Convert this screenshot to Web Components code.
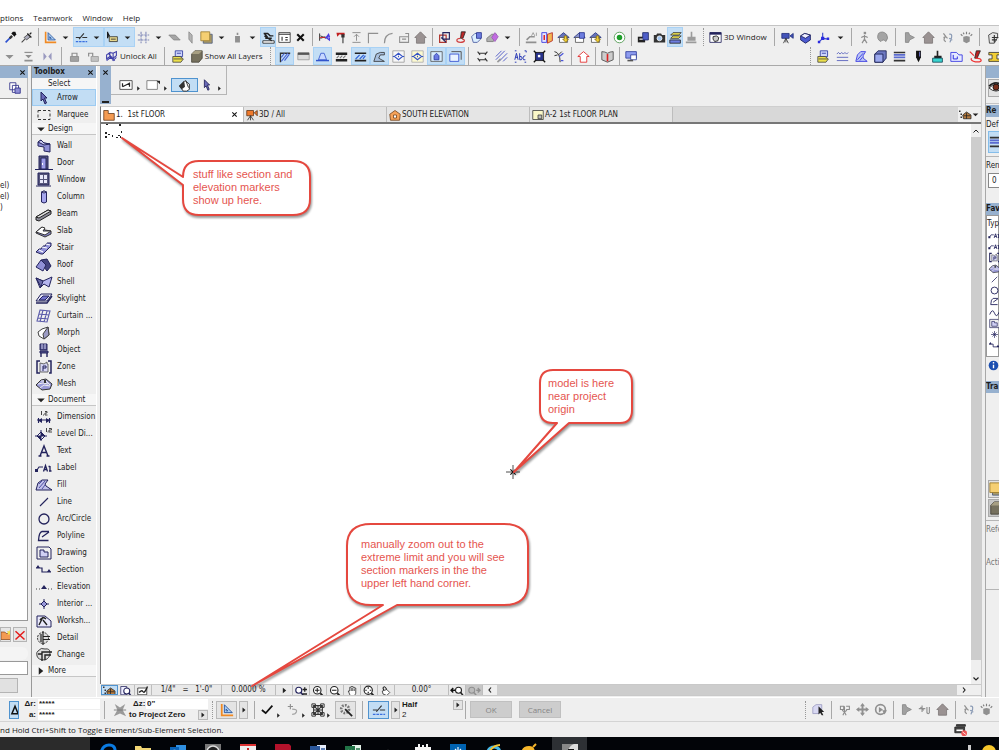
<!DOCTYPE html>
<html lang="en">
<head>
<meta charset="utf-8">
<title>1. 1st FLOOR</title>
<style>
  html, body { height: 100%; margin: 0; }
  body {
    overflow: hidden;
    background: #efefef;
    color: #1c1c1c;
    font: 8px/12px "DejaVu Sans Condensed", "DejaVu Sans", sans-serif;
  }
</style>
</head>
<body>
<cad-app></cad-app>
<script>
const s = (d, c = '#222', w = 1.4) => `<path d="${d}" fill="none" stroke="${c}" stroke-width="${w}"/>`;
const f = (d, c = '#222', st = 'none') => `<path d="${d}" fill="${c}" stroke="${st}"/>`;
const NAVY = '#23235c', BLUE = '#2b2be0', LILAC = '#8f8fd6', GREY = '#909090';

const ICONS = {
  // general
  down: f('M3 6h10l-5 5z'),
  right: f('M5 3v10l6-5z'),
  downgrey: f('M3 6h10l-5 5z', GREY),
  close: s('M3 3l10 10M13 3L3 13', '#111', 2.4),
  pipette: s('M2 14l6-6', '#2b50d0', 2) + s('M7 9l3-3', '#333', 3) + f('M9 3l4 4 2-3-1-3-3 0z', '#111'),
  syringe: s('M2 14l4-4', '#444', 1.4) + f('M5 8l5-4 3 3-5 4z', '#aab', '#444') + s('M9 3l5 5M12 4l2-2', '#222', 1.6),
  setsquare: s('M2 1v14M2 14h13', '#f08a24', 2) + f('M5 2v9h9z', '#a9cdf3', '#24509a') + f('M7 7v2h2z', '#fff', '#24509a'),
  guides: s('M1 8h5M9 8h6M5 10l6-7', '#333', 1.3) + `<path d="M1 13h14" stroke="#3a6fe0" stroke-width="1.6" stroke-dasharray="3 1"/>`,
  tracker: f('M2 1l1 7 2-2z', '#111') + s('M2 1v8', '#111', 1.4) + f('M4 7h10v6H4z', '#e9d98c', '#333') + s('M6 10h6', '#222', 1),
  grid: `<path d="M5 1v14M11 1v14M1 5h14M1 11h14" fill="none" stroke="#7f88b8" stroke-width="1.3" stroke-dasharray="3 1"/>`,
  plane: f('M1 5h8l6 6H7z', '#a5a5a5', '#858585'),
  planev: f('M6 1l4 4v10l-4-5z', '#b4b4b4', '#8a8a8a'),
  ghost: f('M4 4h11v11H4z', '#a89a6a', '#4c5d80') + f('M1 1h11v11H1z', '#f5cf72', '#9a7a2c'),
  weight: f('M5 6h6v8H5zM7 2h2v3H7z', GREY),
  worksheet: f('M1 12h14v3H1z', '#fff', '#222') + s('M2 3h5l3 3h4M3 6l9 6M4 9h8M3 3l4 5', '#222', 1.8),
  window12: f('M1 2h14v12H1z', '#fff', '#333') + s('M1 4h14M5 7v5M9 8h3M9 11h3', '#333'),
  cross: s('M4 4l8 8M12 4l-8 8', '#111', 2.6),
  scissors: s('M2 3v9M3 6l7 3M3 9l6-2', '#333', 1.2) + s('M2 8h8', '#d22', 1) + s('M10 8l3-4 1 3-4 1 4 3 0-3', '#4a3ce0', 1.5),
  axe: s('M11 4v11', '#555', 1.6) + f('M3 2h10v3h-3l-3-1-3 3z', '#c22121') + f('M9 4h4v4H9z', '#333'),
  split: s('M3 2h10M3 14h10M8 4v8M5 7l3-3 3 3', GREY, 1.2),
  corner: s('M3 15V3h12', GREY, 1.4),
  fillet: s('M3 15Q3 4 13 3', GREY, 1.5),
  resize: s('M2 7h11v7H2zM9 3h4v4M5 10h5', GREY, 1.3),
  housegrey: f('M8 1l7 7h-2v7H3V8H1z', '#9a9292', '#7c7676'),
  suspend: s('M2 5h8v9H2z', '#b2372f', 1.5) + s('M6 2h8v8H6zM4 8l6 6', NAVY, 1.4),
  marker: f('M9 1h5l-3 8H8z', '#c02828', '#222') + s('M8 9c-6 0-6 5 0 5s6-4 2-4', '#d04040', 1.5),
  shape: f('M2 7l4-4h6l1 7-4 4H4z', '#dcefff', '#43539a') + f('M8 2h6v7H8z', '#6d7de0', '#26328c'),
  paint: f('M1 9l6-5h6l-4 9H1z', '#b0b0b0', '#777') + f('M7 8l4-6 4 5-4 6z', '#c16be0', '#9a58b8'),
  a1: s('M1 14h13M2 11l4-4h6', GREY, 2) + s('M8 6l2-4 2 4M14 2v4', GREY, 1),
  info: f('M1 2h6v12H1z', '#e6e6ff', BLUE) + s('M4 5v6', '#d22', 1.8) + f('M8 4l6-2v10l-6 3z', '#f4b752', '#b22222'),
  housedl: f('M1 8l7-6 7 6z', '#6573bb', '#26347f') + f('M3 8h10v6H3z', '#fff', '#555') + f('M9 6h3v4h2l-3 4-4-4h2z', '#f2cf36', '#8b7312'),
  houseup: f('M1 8l7-6 7 6z', '#8a93cc', '#26347f') + f('M3 8h10v6H3z', '#fff', '#555') + f('M8 2h6v7H8z', '#6d7de0', '#26328c'),
  target: `<circle cx="8" cy="8" r="6.5" fill="#fff" stroke="#419041"/><circle cx="8" cy="8" r="3.4" fill="#1e9e2a"/>`,
  cameras: f('M1 7h9v7H1z', '#222') + f('M7 2h7v9H7z', '#4e5ec8', '#1c2766') + s('M3 10h4', '#fff'),
  camera: f('M1 5h3l1-2h5l1 2h4v9H1z', '#333') + `<circle cx="8" cy="9" r="3" fill="#a3c7f3" stroke="#fff"/>`,
  layers: f('M2 5l3-3h10l-3 3zM2 9l3-3h10l-3 3z', '#ece050', '#333') + f('M1 11h13v4H1z', '#6d7de0', '#222'),
  brushgrey: f('M7 1h2v6h4v5H3V7h4zM1 13h13v2H1z', '#9b9b9b'),
  win3d: f('M1 2h14v12H1z', '#fff', NAVY) + s('M1 3h14', NAVY, 3) + f('M5 7l4-1 3 2-1 4-4 1-2-3z', '#ccc', '#111'),
  cam3d: f('M1 3h9v6H1zM11 6l4-3v6z', '#4353b8', '#1f2b7a') + s('M6 9l-3 6M6 9l3 6M6 9v5', '#333', 1),
  cube: f('M2 6l5-3 7 2v6l-6 4-6-4z', '#4d5bd0', '#151a5a') + f('M2 6l5-3 7 2-6 4z', '#eef', '#151a5a'),
  axes: s('M7 9V2M7 9l7 1M7 9l-5 5', '#3a48cd', 1.4) + f('M5 7h4v4H5zM1 12h3v3H1zM12 8h3v3h-3z', BLUE),
  walk: s('M8 5v5l-3 5M8 10l3 5M4 8l4-2 4 2', GREY, 1.5) + f('M7 1h3v3H7z', GREY),
  globe: f('M3 3q5-4 10 1 3 5-1 9-3-4-6 0-6-3-3-10z', '#a4a4a4', '#858585'),
  play: f('M3 2h4l1 3 6 3-6 3-1 3H3z', '#a0a0a0', '#858585'),
  orbit: s('M3 3l3 4M5 7q-3 5 1 6M3 8l3-1 2 2', GREY, 1.5) + s('M10 4q4-1 3 4l-2 6M10 9l4 2', '#8b9bb5', 1.5),
  explode: f('M4 7l4-1 4 1v6l-4 2-4-2z', GREY) + s('M3 6L1 4M8 4V1M13 6l2-2M5 4L4 2M11 4l1-2', '#7f7f7f', 1.4),
  doc3d: f('M2 5l5-3 6 1v5l-4 7H3z', '#e7e7e7', '#333') + s('M6 8h8M6 11h6M9 5v9', '#333', 1.4),
  alignb: s('M3 3h10', GREY, 1.5) + f('M4 6h8l-4 4zM3 12h10v2H3z', GREY),
  mirror: f('M3 3v10l4-5zM13 3v10L9 8z', '#9a9ac0'),
  lock: s('M5 8V4h6v4', GREY, 1.5) + f('M3 8h10v6H3z', '#a2a2a2', '#888'),
  unlock: s('M2 8V4h5v4', GREY, 1.5) + f('M5 8h9v6H5z', '#c2c2c2', '#999'),
  lockall: s('M2 6l4-3v5l-4 3zM6 3l4 1v5M10 4l4-2v5l-4 3M2 13l4-3 5 1M6 8l4 5 4-4M4 4l8 9', '#3b3ba8', 1.3),
  layerset: f('M4 1h9v7H4z', '#cdd4fb', '#27359c') + s('M6 4h5', '#27359c', 1) + f('M1 8h9l4 3-3 4H1z', '#ece04a', '#444') + s('M2 11h11', '#444', 1),
  boxgrey: f('M2 5l4-4h9v9l-4 5H2z', '#76715e', '#47443a') + f('M2 5l4-4h9l-4 4z', '#a79f83'),
  hatch: s('M3 15V4h12', '#333', 1.6) + s('M4 14l8-10M4 9l4-5M8 13l6-8', '#4763d2', 1.4),
  hatchtop: f('M1 4h14v8H1z', '#dcdcdc', '#999') + f('M1 3h14v3H1z', '#555'),
  trap: f('M3 12l3-8h4l3 8z', '#c7d8ff', '#3254cc') + s('M0 13h16', '#3254cc', 1.8),
  band: f('M1 3h14v3H1zM1 11h14v3H1z', '#222') + s('M2 10l3-3M6 10l3-3M10 10l3-3', '#777', 1.3),
  bandblue: f('M1 3h14v2H1zM1 12h14v2H1z', '#222') + s('M2 11l5-5M7 11l5-5M11 11l3-4', '#3566d8', 1.6),
  fillshape: f('M1 14l3-9 5-2h5v3H9l-2 4 7 4z', '#a8c0de', '#333'),
  diamond: f('M1 1h14v14H1z', '#f8f8f8', '#999') + s('M3 8l5-4 5 4-5 4zM8 7v2M1 8h3M12 8h3', '#3452c5', 1.3),
  diamondy: f('M1 1h14v14H1z', '#fcfad0', '#aaa') + s('M3 8l5-4 5 4-5 4zM8 7v2M1 8h3M12 8h3', '#3452c5', 1.3),
  elev: f('M1 2h14v12H1z', '#d7ebfc', '#555') + f('M5 12V7l3-3 3 3v5z', '#6c7ae3', '#2636a5'),
  sheet: f('M1 5h11v9H1z', '#e9f3ff', '#2b46cf') + s('M3 2h12v10', '#555', 1.2),
  dims: s('M4 4h8M4 12h8M2 2l3 4M11 6l3-4M2 10l3 4M14 14l-3-4', '#333', 1.3),
  fills: s('M1 8l7-7M1 12L12 1M5 14L15 4M10 14l5-5', '#5560c9', 1.2) + s('M3 15l4-4', '#999', 2),
  abc: s('M1 12l2-8 2 8M2 9h3M7 4v8h2q2-2 0-4H7M14 7q-3 0-3 3t3 2M1 1h2M13 1h2v2M1 15h2M13 15h2', '#2839b5', 1.2),
  picture: f('M3 3h10v10H3z', '#27318a', '#111') + s('M1 1l3 3M15 1l-3 3M1 15l3-3M15 15l-3-3', '#111', 1.6) + f('M6 6h3v3H6z', '#fff'),
  curve: s('M3 2q7 1 7 13M3 7l4-1M12 2l-4 4', '#333', 1.2) + s('M9 8l5-4M11 13h3', '#4a55d8', 1.6),
  redhouse: f('M8 2l7 6h-3v7H4V8H1z', '#fff', '#e11e1e'),
  book: f('M1 2q4 0 7 2 3-2 7-2v10l-7 3-7-3z', '#ccc', '#444') + s('M8 5v9', '#d22', 2),
  monitor: f('M1 2h13v8H1z', '#8e9cf0', '#2b3a9a') + f('M7 6h7v6H7z', '#fff', '#2b3a9a') + s('M3 13h7', '#555', 2),
  wave: s('M1 5l2-2 2 2 2-2 2 2 2-2 2 2 2-2M1 9h14M1 13h14', '#5861bd', 1.1),
  bluefill: f('M1 14l2-8 4-4h6l-3 5 0 3 5 4z', '#bcc7f5', BLUE) + s('M3 12l7-8M6 13l3-4', BLUE, 1),
  bluecube: f('M1 5l4-4h10v9l-4 5H1z', '#6d78c0', '#161b4d') + f('M1 5h10v10H1z', '#9ba8ee', '#161b4d'),
  material: f('M1 2h14v2H1zM1 12h14v2H1z', '#333') + s('M1 6h14M1 9h14', '#5a6bd0', 2),
  pen: f('M5 1h6v8l-3 6-3-6z', '#111') + f('M9 2h1v6H9z', '#8888ff'),
  brush: f('M7 1h2v6h4v3H4V7h3z', '#222') + f('M2 10h12v5H2z', '#39d4cf', '#145'),
  zoneb: f('M1 3h7l3 3h4v8H1z', '#e5e9ff', BLUE) + s('M4 6v5h5V8', BLUE, 1.2),
  redpen: f('M9 1h5l-4 9H7z', '#b22', '#222') + s('M1 2l5 5M3 10c-3 5 12 6 12 3s-7-3-7-3', '#e33', 1.5),
  ifcy: f('M1 3h14v3h-4v5h4v3H1v-3h4V6H1z', '#f2cf36', '#333'),
  // toolbox
  arrow: f('M5 2l6 6H8.500l2 5-1.500 1-2-5-2 2z', '#6a6ab8', NAVY),
  marquee: `<path d="M2 3.500h12v9H2z" fill="none" stroke="#333" stroke-width="1" stroke-dasharray="3 2"/>`,
  wall: f('M2 4l3-2 3 3 6 1v8l-6-1V9L2 8z', LILAC, NAVY) + f('M2 4l3-2 3 3 6 1-6 1z', '#c9c9ee', NAVY),
  door: f('M3 1h9v13H3z', '#55557a', NAVY) + f('M5 3h5v11H5z', '#9d9de8', NAVY) + f('M6 8h1v2H6z', '#fff') + s('M-1 14.500h18', NAVY, 1),
  window: f('M2 1h11v12H2z', '#55557a', NAVY) + f('M4 3h3v4H4zM8 3h3v4H8zM4 8h3v3H4zM8 8h3v3H8z', '#e8e8fa') + s('M0 14h15', NAVY, 1),
  column: f('M5.500 3q2.500-2 5 0v10q-2.500 2-5 0z', '#a5a5ec', NAVY) + f('M5.500 3q2.500-2 5 0-2.500 2-5 0z', '#fff', NAVY),
  beam: f('M0 11L12 4l3 1v3L3 15l-3-1z', '#8b8b98', '#222') + f('M0 11L12 4l3 1L3 12z', '#e0e0e0', '#222'),
  slab: f('M0 9l6-5 3 3 6 1v3l-6 3-9-4z', '#8686c8', '#333') + f('M0 9l6-5 3 1-2 3 8 0-6 4z', '#fff', '#333'),
  stair: f('M0 12l3-3 2 0 2-3 2 0 2-3h4v3l-8 8H5z', LILAC, NAVY) + s('M10 4l4 1M6 7l5 1M3 10l4 2', '#fff', 1.1),
  roof: f('M5 3l6-1 4 7-4 5-3-4z', '#43437e', NAVY) + f('M5 3L0 10l7 4 3-6z', LILAC, NAVY),
  shell: f('M0 4l7 3 9-4-3 10-5-3-4 4z', '#b5b5ee', NAVY) + f('M0 4l7 3-2 6z', '#6a6aa8', NAVY),
  skylight: f('M0 10l5-7h11l-5 7z', '#e8e8f8', NAVY) + f('M3 9l4-4h6l-4 4z', '#7272cc', NAVY) + s('M0 12h11l5-7', NAVY, 1.4),
  curtain: s('M4 2l10 1-3 11-10-1zM7 2L4 14M11 3L8 14M3 6l10 1M2 10l10 1', '#5c5cab', 1.1),
  morph: f('M2 7l4-3 6-2 1 8-5 4-5-3z', '#fff', '#444') + f('M7 9l5-7 1 8-5 4z', '#9d9dc5', '#444'),
  object: f('M4 2h7v6H4zM4 9h8v2H4z', '#55558d', NAVY) + s('M6 2v5M9 2v5', '#c9c9ee', 1) + s('M5 11v4M11 11v4', NAVY, 1.4),
  zone: f('M4 4l4 1 3-2v2h1v8H4z', '#d6d6f6', '#666') + s('M4 2H1v12h3M12 2h3v12h-2', NAVY, 1.5) + s('M7 7v5M7 7h3v2H7', NAVY, 1),
  mesh: f('M0 9l5-5 5-1 6 5-2 5-8 1z', '#9b9bd8', '#333') + s('M2 8l5-1 5 1M5 5l5 0 4 4M4 12l4-3 6 1', '#eee', 1) + f('M8 4h2v3H8z', '#333'),
  dimension: s('M1 11h14M2.500 9v5M13.500 9v5', NAVY, 1.1) + f('M2 11.500l4-2.500v5zM14 11.500l-4-2.500v5z', NAVY) + s('M5.500 2v4M7.500 5.500v1M9 2.500h2v1.500H9v2h2.500', '#444', 1),
  level: f('M5 6l4 4-4 4-4-4z', '#fff', NAVY) + f('M5 6v4h4zM5 10v4l-4-4z', NAVY) + s('M5 4v11M-1 10h12', NAVY, 1) + s('M10.500 2v4M12 5.500v1M13 2.500h2.500v1.500H13v2h3', '#444', 1),
  text: s('M4 13L8 3l4 10M5.500 9.500h5M2.500 13h3M10.500 13h3', NAVY, 1.4),
  label: f('M-1 9h3v3h-3z', NAVY) + s('M1 10l2-3h4', NAVY, 1.1) + s('M7.500 11.500l2-6 2 6M8.500 9.500h2M14 6v5M12.500 6.500H14M13 11h2.500', NAVY, 1.3),
  fill: f('M0 13l2-7 4-3h6l-3 4 1 2 6 4z', '#c2c2ea', NAVY) + s('M3 11l6-7M6 12l3-4M3 7l3-3', '#5050a5', 1),
  line: s('M4 12l8-8', NAVY, 1.1),
  circle: `<circle cx="8" cy="8" r="5" fill="none" stroke="${NAVY}" stroke-width="1.3"/>`,
  polyline: s('M13 3.500H6Q3 4 2.500 12.500h10M6 9l7-5', NAVY, 1.3),
  drawing: f('M1 2h12l2 2v10H1z', '#eee', NAVY) + f('M4 5h4v2h4v5H4z', '#d0d0f4', NAVY),
  section: s('M0 6h6v4h9', NAVY, 1.2) + f('M0 6l2-3 2 3zM11 10l2-3 2 3z', NAVY),
  elevation: s('M0 10h1M3 10h1M12 10h1M15 10h1', '#444', 1.2) + f('M5 10l3-4 3 4z', NAVY),
  interior: s('M8 3v10M3 8h10', NAVY, 1) + f('M8 5l3 3-3 3-3-3z', '#9898d8', NAVY),
  workshop: f('M1 3h8l6 5v6H1z', '#e9e9fa', NAVY) + s('M3 12l4-8M7 7l4 5M4 7q3-4 6-1', '#222', 1.4),
  detail: `<circle cx="7" cy="8" r="5.500" fill="#ddd" stroke="#333" stroke-dasharray="2 1"/>` + s('M7 1v14M5 4v8M7 6.500h7M7 9.500h7', '#222', 1.2),
  change: f('M2 4q3-4 7-2 5-1 5 4 0 5-5 7-7 0-8-4-1-4 1-5z', '#ddd', '#444') + s('M6 14V5h10M9 13V8h6M2 7h4', '#222', 1.4),
  // palettes
  stack: f('M2 2h7v8H2zM5 5h7v8H5z', '#fff', '#33338a') + f('M8 8h6v6H8z', '#8f8fd6', '#33338a'),
  folder: f('M0 4h5l2 2h6v8H0z', '#f49b52', '#8b4a1c') + f('M11 1l1 2 3 0-2 2 1 3-3-1-2 1 0-3-1-2 3 0z', '#f4e14a'),
  reddel: s('M2 3l12 11M14 3L2 14', '#e41b1b', 2),
  infogeo: f('M1 3h14v10H1z', '#fff', '#444') + s('M4 10l8-4M4 6v4M12 5v5', '#222', 1.4),
  rectgeo: f('M1 3h12v10H1z', '#fff', '#777') + f('M12 3h4v4z', '#222'),
  magic: f('M2 9l6-6 5 4v6l-3 2H6z', '#fff', '#222') + f('M1 9l6-6 1 7-4 3z', '#333') + s('M9 3l3 8', '#222', 1),
  plan: f('M1 2h6v4h8v9H1z', '#f49b52', '#5b3214'),
  cam: f('M1 2h9v7H1zM11 5l4-3v7z', '#f07a2c', '#5b3214') + s('M6 9l-4 6M6 9l4 6M6 9v6', '#333', 1.1),
  elevtab: f('M1 7l7-5 7 5-1 8H2z', '#f6a35a', '#6a3c16') + f('M6 8h4v4H6z', '#fff', '#6a3c16'),
  layout: f('M1 2h14v12H1z', '#fbf8c8', '#333') + f('M8 8h5v5H8z', '#bbb', '#333'),
  tree: s('M1 2v2M3 6v2M3 10v2', '#333', 2) + f('M5 8l5-4 6 4v5H6z', '#b77c3f', '#222') + s('M10 5v8M6 9h9', '#222', 1),
  eye: f('M0 8q8-8 16 0-8 7-16 0z', '#fff', '#222') + `<circle cx="8" cy="7" r="3.5" fill="#7a2f1c" stroke="#111"/>` + s('M0 6q8-8 16 0', '#222', 2),
  infocircle: `<circle cx="8" cy="8" r="7" fill="#1c4fb0"/>` + s('M8 7v5M8 3v2', '#fff', 2),
  star: s('M8 3v10M3 8h10M5 5l6 6M11 5l-6 6', NAVY, 1),
  spline: s('M1 11q4-10 7-2t7-2', NAVY, 1.3),
  // view controls
  findsel: f('M1 2h8v11H1z', '#eef', NAVY) + `<circle cx="9" cy="8" r="4" fill="#fff" stroke="${NAVY}" stroke-width="1.4"/>` + s('M12 11l3 4', NAVY, 2),
  navpen: f('M1 4h12v9H1z', '#fff', '#222') + s('M3 10q3-4 5-1t6-7', '#222', 1.8),
  zoompm: `<circle cx="5" cy="7" r="4" fill="#fff" stroke="${NAVY}" stroke-width="1.5"/>` + s('M8 10l3 4', NAVY, 2) + s('M13 3v6M10 6h6M10 12h6', '#222', 1.7),
  zoomin: `<circle cx="7" cy="7" r="5" fill="#fff" stroke="#222" stroke-width="1.5"/>` + s('M11 11l4 4', '#222', 2.4) + s('M7 4v6M4 7h6', '#222'),
  zoomout: `<circle cx="7" cy="7" r="5" fill="#fff" stroke="#222" stroke-width="1.5"/>` + s('M11 11l4 4', '#222', 2.4) + s('M4 7h6', '#222'),
  hand: f('M3 8l2 0V3h2v-1h2v1h2v1h2v7l-2 4H6z', '#fff', '#222') + s('M7 4v4M9 4v4M11 5v3', '#222', 1),
  zoomfit: `<circle cx="7" cy="7" r="5.5" fill="#fff" stroke="#222" stroke-width="1.5"/>` + s('M11 11l4 4', '#222', 2.4) + s('M7 3v2M7 9v2M3 7h2M9 7h2', '#222', 1.6),
  rotate: f('M3 8l6-2 4 4-4 4-5-2z', '#fff', '#222') + s('M9 6Q6 0 4 4l1 3', '#222', 1.4),
  zoomprev: s('M0 7h6M3 4L0 7l3 3', '#111', 1.8) + `<circle cx="10" cy="7" r="4" fill="#fff" stroke="#222" stroke-width="1.4"/>` + s('M13 10l3 4', '#222', 2),
  zoomnext: s('M16 7h-5M13 4l3 3-3 3', GREY, 1.8) + `<circle cx="5" cy="7" r="4" fill="#bbb" stroke="${GREY}" stroke-width="1.4"/>` + s('M8 10l3 4', GREY, 2),
  chevl: s('M10 3L6 8l4 5', '#222', 2.4), chevr: s('M6 3l4 5-4 5', '#222', 2.4),
  chevu: s('M3 11l5-5 5 5', '#222', 2), chevd: s('M3 5l5 5 5-5', '#222', 2.4),
  // info box
  tri: s('M8 2L3 14h10z', '#111', 2.4),
  gravity: f('M2 1l6 4 6-4-3 7 4 7-7-3-7 3 4-7z', '#9a9a9a') + s('M1 8h14', '#777', 1),
  check: s('M1 8l5 4M5 12l8-9', '#111', 2),
  perp: s('M5 1v6M2 4h6', '#8f8f8f', 1.3) + s('M7 7q6 0 5 3t-5 3', '#a5a5a5', 1.3),
  gridsnap: s('M3 3h10v10H3zM3 8h10M8 3v10M3 3l10 10M13 3L3 13', '#333', 1.2) + s('M1 1h4v4H1zM11 1h4v4h-4zM1 11h4v4H1zM11 11h4v4h-4z', '#333', 1.1),
  gearwand: `<circle cx="7" cy="7" r="4.5" fill="none" stroke="#777" stroke-width="3" stroke-dasharray="2 1.4"/>` + s('M7 7l8 8', '#222', 2),
  boxsel: f('M1 5l4-3h7v8l-3 3H1z', '#d8d8f2', '#9a9ac0') + f('M8 4l7 7h-3l2 4-2 0-2-3-2 2z', '#222'),
  fly: s('M8 4v9M3 4h4v4H3zM10 4h4v4h-4M5 9l3 2 3-2M6 15l2-4 2 4', '#8b8b8b', 1.3),
  pan: s('M8 2v12M2 8h12', GREY, 2.4) + f('M8 0l3 4H5zM8 16l3-4H5zM0 8l4-3v6zM16 8l-4-3v6z', GREY),
  spin: `<circle cx="8" cy="8" r="6" fill="none" stroke="${GREY}" stroke-width="2"/>` + f('M6 5l5 3-5 4zM10 9h6l-3 5z', GREY),
  snapb: s('M5 3v8M1 7h8M3 5l4 4M11 5v7q2 2 3 0V5', GREY, 1.4),
  msgs: f('M3 2h11v2H3z', '#444', '#222') + f('M1 5h12v7H1z', '#444', '#222') + f('M3 8h8v2H3z', '#fff') + `<circle cx="12.5" cy="12.5" r="3.5" fill="#e55"/>` + s('M10.500 11l4 3', '#fff', 1),
  // taskbar
  edge: s('M1 11Q2 2 9 2t6 8H5q1 6 9 4', '#0a7ae0', 3),
  tfolder: f('M0 3h6l1 2h9v11H0z', '#f2d675') + f('M0 7h16v2H0z', '#fae9a2'),
  outlook: f('M6 2h10v12H6z', '#2f8fe0') + f('M0 4h9v12H0z', '#0a64b8') + `<circle cx="4.500" cy="10" r="2.500" fill="none" stroke="#fff" stroke-width="1.500"/>`,
  lens: f('M0 1h16v15H0z', '#777') + `<circle cx="8" cy="9" r="6" fill="#222" stroke="#ddd" stroke-width="1.500"/><circle cx="8" cy="9" r="2" fill="#bbb"/>`,
  pdf: f('M0 1h16v15H0z', '#eee') + f('M0 1h16v2H0z', '#d33') + s('M8 5v8', '#c22', 2),
  redapp: f('M0 1h14l2 2v13H0z', '#b3122b') + s('M4 8h5q4 3-2 5', '#fff', 2),
  word: f('M7 2h9v14H7z', '#e8eefb') + f('M0 3h10v13H0z', '#2b579a') + s('M2 7l1 6 2-4 2 4 1-6', '#fff', 1.3) + s('M11 6h4M11 9h4', '#2b579a'),
  excel: f('M7 2h9v14H7z', '#e4f2e8') + f('M0 3h10v13H0z', '#217346') + s('M3 7l4 7M7 7l-4 7', '#fff', 1.5) + s('M11 6h4M11 9h4', '#217346'),
  peak: f('M5 14l3-8 3 8z', '#555'),
  cal: f('M0 4h16v12H0z', '#f4f4f4') + s('M4 1v5M12 1v5M8 2v3', '#f4f4f4', 2) + s('M2 9h12', '#111', 1.5),
  sun: f('M0 1h16v15H0z', '#0063b1') + s('M8 4v10M3 9h10M5 6l6 6M11 6l-6 6', '#fff', 1.1),
  ie: s('M2 12Q3 4 9 4t6 7H6', '#45b8ea', 3) + s('M1 15Q6 2 15 2', '#f3c332', 2),
  gold: s('M3 12Q3 5 9 5q4 0 4 5', '#f6b62b', 4) + s('M13 4l3-3', '#f6b62b', 2),
  archi: f('M0 1h16v15H0z', '#888') + f('M3 16Q6 3 12 1h4v9l-5 6z', '#ddd') + f('M6 6h6v7H6z', '#111'),
  tray: f('M7 3h3v13H7z', '#ccc'),
  coin: `<circle cx="8" cy="10" r="7" fill="#f6c62b"/>`,
  origin: s('M8 0v16M0 8h16', '#333', 1) + s('M5 5l6 6M11 5l-6 6', '#111', 1.4)
};

// registers an element whose shadow root is rendered from its attributes
function define(name, css, render) {
  customElements.define(name, class extends HTMLElement {
    constructor() {
      super();
      this.attachShadow({ mode: 'open' });
    }
    connectedCallback() {
      const tpl = document.createElement('template');
      tpl.innerHTML = `<style>*{box-sizing:border-box}button,input{font:inherit;color:inherit;margin:0}${css}</style>${render(this)}`;
      this.shadowRoot.replaceChildren(tpl.content.cloneNode(true));
    }
  });
}

const attr = (el, n, d = '') => el.getAttribute(n) ?? d;

define('ui-icon', `
  :host { display: block; flex: none; width: var(--icon, 14px); height: var(--icon, 14px); }
  svg { display: block; width: 100%; height: 100%; overflow: visible; }
`, el => `<svg viewBox="0 0 16 16" aria-hidden="true">${ICONS[attr(el, 'name')]}</svg>`);

define('menu-bar', `
  :host { display: block; background: #fff; padding-top: 11px; }
  nav { display: flex; gap: 10px; height: 14px; font: 8px/14px "Open Sans", sans-serif; }
  a { color: inherit; text-decoration: none; }
`, () => `<nav>${['ptions', 'Teamwork', 'Window', 'Help'].map(t => `<a href="#">${t}</a>`).join('')}</nav>`);

define('tool-sep', `
  :host { display: flex; flex: none; width: 8px; justify-content: center; align-items: center; align-self: stretch; }
  i { width: 1px; height: 18px; background: #a8a8a8; }
  :host([grip]) i { width: 0; background: none; border-left: 1px dotted #999; }
`, () => '<i></i>');

define('tool-button', `
  :host { display: flex; flex: none; height: 100%; }
  :host([active]) { background: #c3def5; outline: 1px solid #a9d2f5; outline-offset: -1px; }
  button {
    display: flex; align-items: center; justify-content: center; gap: 2px;
    min-width: var(--slot, 16px); padding: 0; border: 0; background: none;
    font: 8px/12px "Open Sans", sans-serif; white-space: nowrap;
  }
  button.text { padding: 0 4px 0 2px; }
  button.drop { min-width: 15px; --icon: 9px; }
`, el => `
  <button class="${attr(el, 'text') && 'text'}" aria-label="${attr(el, 'text') || attr(el, 'icon')}"><ui-icon name="${attr(el, 'icon')}"></ui-icon>${attr(el, 'text')}</button>
  ${el.hasAttribute('drop') ? '<button class="drop" aria-label="More options"><ui-icon name="down"></ui-icon></button>' : ''}
`);

// items: "|" separator, ":" grip, "*name" pressed, "name+" with a drop-down, "name=Some_text"
define('tool-row', `
  :host { display: flex; align-items: center; height: 20px; --icon: 13px; }
`, el => attr(el, 'items').split(/\s+/).filter(Boolean).map(t => {
  if (t === '|') return '<tool-sep></tool-sep>';
  if (t === ':') return '<tool-sep grip></tool-sep>';
  const [, on, name, drop, text] = t.match(/^(\*?)(\w+)(\+?)(?:=(.*))?$/);
  return `<tool-button icon="${name}" ${on && 'active'} ${drop && 'drop'} ${text ? `text="${text.replace(/_/g, ' ')}"` : ''}></tool-button>`;
}).join(''));

define('tool-area', `
  :host { display: block; border-top: 1px solid #c4c4c4; border-bottom: 1px solid #a9a9a9; background: #efefef; padding-top: 1px; overflow: hidden; }
  .row { display: flex; height: 20px; }
  .row + .row { height: 18px; margin-right: -5px; justify-content: space-between; }
  tool-row { height: 100%; flex: none; }
  .left { display: flex; }
  .mid { --slot: 18px; }
  .far, .second { --slot: 19px; }
`, () => `
  <div class="row">
    <tool-row style="padding-left:2px" items="pipette syringe | setsquare+ *guides+ *tracker+ grid+ plane planev ghost+ weight+ *worksheet window12 cross | scissors axe split corner fillet resize housegrey | suspend marker shape paint+ | a1 info housedl houseup housedl | target | cameras camera *layers brushgrey : win3d=3D_Window |"></tool-row>
    <tool-row class="mid" items="cam3d cube axes+ | walk globe |"></tool-row>
    <tool-row class="far" items="play housegrey orbit explode | doc3d"></tool-row>
  </div>
  <div class="row">
    <div class="left">
      <tool-row class="second" items="downgrey alignb mirror | lock unlock lockall=Unlock_All | layerset boxgrey=Show_All_Layers : *hatch hatchtop *trap band *bandblue *fillshape diamond diamondy *elev *sheet | dims fills abc picture curve |"></tool-row>
      <tool-row items="redhouse | book | monitor"></tool-row>
    </div>
    <tool-row class="second" items=": layerset wave bluefill bluecube material pen brush zoneb redpen ifcy"></tool-row>
  </div>
`);

define('panel-title', `
  :host { display: flex; align-items: center; justify-content: space-between; flex: none; height: 12px; padding: 0 1px 0 2px; background: #97b1cf; overflow: hidden;
    font: bold 8px/12px "DejaVu Sans Condensed", "DejaVu Sans", sans-serif; --icon: 7px; white-space: nowrap; }
  button { padding: 0 1px; border: 0; background: none; }
`, el => `<slot></slot>${el.hasAttribute('closable') ? '<button aria-label="Close"><ui-icon name="close"></ui-icon></button>' : ''}`);

define('left-panel', `
  :host { display: flex; flex-direction: column; min-width: 0; overflow: hidden; }
  .bar { display: flex; justify-content: flex-end; align-items: center; height: 20px; padding-right: 5px; border-right: 1px solid #bbb; }
  .list { flex: 1; background: #fff; border: 1px solid #999; border-left: 0; padding-top: 81px; line-height: 11px; }
  .list div { height: 11px; }
  .row { display: flex; gap: 2px; padding: 6px 1px 5px 0; --icon: 12px; }
  .row button { padding: 0; width: 15px; height: 15px; border: 1px solid #b4b4b4; background: #e6e6e6; display: grid; place-items: center; overflow: hidden; }
  .row button:first-child { width: 11px; }
  .band { height: 13px; background: #f4f4f4; border-radius: 0 6px 6px 0; }
  input { width: 28px; height: 14px; border: 1px solid #999; border-left: 0; background: #fff; margin-top: 1px; }
  .ok { width: 18px; height: 15px; margin: 3px 0 4px; border: 1px solid #b4b4b4; border-left: 0; background: #e1e1e1; }
`, () => `
  <panel-title closable><span></span></panel-title>
  <div class="bar"><ui-icon name="stack"></ui-icon></div>
  <div class="list"><div>el)</div><div>el)</div><div>)</div></div>
  <div class="row"><button aria-label="New folder"><ui-icon name="folder"></ui-icon></button><button aria-label="Delete"><ui-icon name="reddel"></ui-icon></button></div>
  <div class="band"></div>
  <input aria-label="Name">
  <button class="ok" aria-label="Settings"></button>
`);

define('toolbox-item', `
  :host { display: block; --icon: 16px; }
  button { display: flex; align-items: center; gap: 5px; width: 100%; height: 17px; padding: 0 0 0 4px; border: 0; background: none; white-space: nowrap; text-align: left; }
  :host([active]) button { background: #c2ddf4; outline: 1px solid #9ccbf2; outline-offset: -1px; }
`, el => `<button><ui-icon name="${attr(el, 'icon')}"></ui-icon><slot></slot></button>`);

define('toolbox-head', `
  :host { display: flex; align-items: center; gap: 1px; height: 12px; padding-left: 3px; background: #f6f6f6; border-bottom: 1px solid #c6c6c6; --icon: 12px; }
  :host([plain]) { height: 11px; padding-left: 16px; border: 0; }
`, el => `${el.hasAttribute('plain') ? '' : `<ui-icon name="${attr(el, 'icon', 'down')}"></ui-icon>`}<slot></slot>`);

const DESIGN = 'wall:Wall door:Door window:Window column:Column beam:Beam slab:Slab stair:Stair roof:Roof shell:Shell skylight:Skylight curtain:Curtain_... morph:Morph object:Object zone:Zone mesh:Mesh';
const DOCUMENT = 'dimension:Dimension level:Level_Di... text:Text label:Label fill:Fill line:Line circle:Arc/Circle polyline:Polyline drawing:Drawing section:Section elevation:Elevation interior:Interior_... workshop:Worksh... detail:Detail change:Change';
const toolItems = list => list.split(' ').map(t => {
  const [icon, label] = t.split(':');
  return `<toolbox-item icon="${icon}">${label.replace('_', ' ')}</toolbox-item>`;
}).join('');

define('toolbox-panel', `
  :host { display: block; min-width: 0; border-left: 1px solid #999; border-right: 1px solid #fff; overflow: hidden; }
  .group { padding: 2px 0; }
`, () => `
  <panel-title closable>Toolbox</panel-title>
  <toolbox-head plain>Select</toolbox-head>
  <toolbox-item icon="arrow" active>Arrow</toolbox-item>
  <toolbox-item icon="marquee">Marquee</toolbox-item>
  <toolbox-head>Design</toolbox-head>
  <div class="group">${toolItems(DESIGN)}</div>
  <toolbox-head>Document</toolbox-head>
  <div class="group">${toolItems(DOCUMENT)}</div>
  <toolbox-head icon="right">More</toolbox-head>
`);

define('info-dock', `
  :host { display: flex; height: 38px; }
  .strip { display: flex; flex-direction: column; justify-content: space-between; align-items: center; width: 11px; padding: 3px 0 1px; background: #97b1cf; --icon: 7px; }
  .strip i { width: 7px; height: 2px; background: #222; }
  .tools { display: flex; align-items: center; height: 29px; padding: 10px 1px 0 6px; border-right: 1px solid #b5b5b5; border-bottom: 1px solid #b5b5b5; }
  button { display: flex; align-items: center; gap: 2px; width: 27px; height: 14px; padding: 0 2px; border: 0; background: none; }
  button ui-icon + ui-icon { --icon: 7px; align-self: flex-end; }
  .on { justify-content: center; border: 1px solid #4f93cf; background: #c2ddf4; }
`, () => `
  <div class="strip"><ui-icon name="close"></ui-icon><i></i></div>
  <div class="tools">
    <button aria-label="Geometry"><ui-icon name="infogeo"></ui-icon><ui-icon name="right"></ui-icon></button>
    <button aria-label="Rectangle"><ui-icon name="rectgeo"></ui-icon><ui-icon name="right"></ui-icon></button>
    <button class="on" aria-label="Quick selection"><ui-icon name="magic"></ui-icon></button>
    <button aria-label="Arrow"><ui-icon name="arrow"></ui-icon><ui-icon name="right"></ui-icon></button>
  </div>
`);

define('doc-tab', `
  :host { display: flex; flex: 0 1 143px; min-width: 0; border-right: 1px solid #bdbdbd; background: #e5e5e5; --icon: 12px; }
  :host([active]) { background: #fff; }
  button { display: flex; align-items: center; gap: 1px; padding: 0 0 0 2px; border: 0; background: none; flex: 1; white-space: nowrap; }
  .close { flex: none; padding: 0 5px; --icon: 7px; }
`, el => `<button><ui-icon name="${attr(el, 'icon')}"></ui-icon><slot></slot></button>${el.hasAttribute('active') ? '<button class="close" aria-label="Close tab"><ui-icon name="close"></ui-icon></button>' : ''}`);

define('tab-strip', `
  :host { display: flex; height: 18px; margin-top: 2px; border: 1px solid #777; border-width: 1px 0 2px 1px; border-top-color: #cfcfcf; background: #d8d8d8; }
  button { display: flex; align-items: center; margin-left: auto; padding: 0 1px; border: 0; background: #efefef; --icon: 12px; }
  button ui-icon + ui-icon { --icon: 9px; }
`, () => `
  <doc-tab icon="plan" active>1.&nbsp; 1st FLOOR</doc-tab>
  <doc-tab icon="cam">3D / All</doc-tab>
  <doc-tab icon="elevtab">SOUTH ELEVATION</doc-tab>
  <doc-tab icon="layout">A-2 1st FLOOR PLAN</doc-tab>
  <button aria-label="Navigator"><ui-icon name="tree"></ui-icon><ui-icon name="down"></ui-icon></button>
`);

define('call-out', `
  :host { position: absolute; display: block; font: 11px/13px "Liberation Sans", sans-serif; color: #e5554f; white-space: nowrap; }
  svg { position: absolute; left: 0; top: 0; overflow: visible; filter: drop-shadow(1px 2px 1px #0006); }
  path { fill: #fff; stroke: #e5483f; stroke-width: 2; stroke-linejoin: round; }
  div { position: relative; }
`, el => `<svg width="1" height="1"><path d="${attr(el, 'shape')}"/></svg><div><slot></slot></div>`);

define('plan-canvas', `
  :host { display: grid; grid-template-columns: minmax(0, 1fr) 10px; flex: 1; border-left: 1px solid #777; background: #fff; }
  .sheet { position: relative; z-index: 1; }
  .scroll { display: flex; flex-direction: column; align-items: center; background: #efefef; --icon: 8px; padding: 3px 0 1px; gap: 2px; }
  .scroll i { flex: 1; width: 10px; background: #cdcdcd; margin-bottom: 13px; }
  .marks { position: absolute; left: 3px; top: 0; }
  .origin { position: absolute; left: 405px; top: 341px; --icon: 14px; }
  .a { left: 82px; top: 37px; padding: 7px 10px; }
  .b { left: 439px; top: 246px; padding: 7px 8px; }
  .c { left: 246px; top: 400px; padding: 14px; }
`, () => `
  <div class="sheet">
    <svg class="marks" width="20" height="16"><path fill="#222" d="M2 0h2v1H2zM15 0h2v2h-2zM1 8h2v2H1zM4 10h2v1H4zM1 12h2v2H1zM8 11h1v2H8zM12 13h2v1h-2zM14 11h2v1h-2zM17 7h1v2h-1zM16 12h1v2h-1z"/></svg>
    <ui-icon class="origin" name="origin"></ui-icon>
    <call-out class="a" shape="M16 0H110Q127 0 127 16V38Q127 54 110 54H16Q0 54 0 38V24L-61 -23L0 16Q0 0 16 0Z">stuff like section and<br>elevation markers<br>show up here.</call-out>
    <call-out class="b" shape="M13 0H80Q92 0 92 13V40Q92 53 80 53H29L-26 102L17 53H13Q0 53 0 40V13Q0 0 13 0Z">model is here<br>near project<br>origin</call-out>
    <call-out class="c" shape="M24 0H157Q181 0 181 22V59Q181 81 157 81H50L-95 162L36 81H24Q0 81 0 59V22Q0 0 24 0Z">manually zoom out to the<br>extreme limit and you will see<br>section markers in the the<br>upper left hand corner.</call-out>
  </div>
  <div class="scroll"><ui-icon name="chevu"></ui-icon><i></i><ui-icon name="chevd"></ui-icon></div>
`);

define('view-bar', `
  :host { display: flex; height: 12px; border: 1px solid #c9c9c9; border-width: 1px 0; --icon: 12px; margin-left: 1px; }
  button { display: grid; place-items: center; width: 17px; padding: 0; border: 0; border-right: 1px solid #bdbdbd; background: #e9e9e9; white-space: nowrap; flex: none; overflow: hidden; line-height: 10px; }
  .on { background: #c2ddf4; outline: 1px solid #4f93cf; outline-offset: -1px; }
  .scale { width: 70px; }
  .zoom { width: 54px; }
  .off { background: #c6c6c6; }
  .scroll { display: flex; align-items: center; flex: 1; gap: 3px; padding-left: 3px; --icon: 8px; }
  .scroll i { flex: 1; align-self: stretch; background: #cdcdcd; }
  .grip { width: 13px; }
`, () => `
  <button class="on" aria-label="Navigator"><ui-icon name="tree"></ui-icon></button>
  <button aria-label="Find"><ui-icon name="findsel"></ui-icon></button>
  <button aria-label="Preview"><ui-icon name="navpen"></ui-icon></button>
  <button class="scale">1/4"&nbsp;&nbsp; =&nbsp;&nbsp; 1'-0"</button>
  <button class="zoom">0.0000 %</button>
  ${['right', 'zoompm', 'zoomin', 'zoomout', 'hand', 'zoomfit', 'rotate'].map(n => `<button aria-label="${n}" ${n === 'right' ? 'style="--icon:9px"' : ''}><ui-icon name="${n}"></ui-icon></button>`).join('')}
  <button class="zoom">0.00°</button>
  <button aria-label="Previous zoom"><ui-icon name="zoomprev"></ui-icon></button>
  <button class="off" aria-label="Next zoom"><ui-icon name="zoomnext"></ui-icon></button>
  <div class="scroll"><ui-icon name="chevl"></ui-icon><i></i><ui-icon name="chevr"></ui-icon></div>
  <div class="grip"></div>
`);

define('right-panel', `
  :host { display: flex; flex-direction: column; min-width: 0; overflow: hidden; border-left: 1px solid #a8a8a8; white-space: nowrap; }
  .pad { line-height: 10px; }
  panel-title { padding: 0; }
  .box { display: grid; place-items: center start; width: 24px; height: 18px; margin: 1px 0 0 2px; border: 1px solid #aaa; background: #e3e3e3; }
  .gap { height: 7px; border-bottom: 1px solid #c4c4c4; margin-bottom: 1px; }
  .on { height: 22px; background: #c2ddf4; border-color: #84bdea; }
  .def { padding-top: 3px; }
  .ren { margin-top: 3px; padding-top: 4px; border-top: 1px solid #b5b5b5; }
  input { width: 30px; height: 15px; margin: 2px 0 15px 2px; border: 1px solid #888; padding: 0 3px; background: #fff; }
  .list { height: 142px; margin: 0 0 3px; padding-top: 2px; border: 1px solid #999; background: #fff; --icon: 11px; }
  .list ui-icon { height: 11px; margin: 0 0 0 2px; }
  .list + ui-icon { --icon: 11px; margin: 0 0 10px 2px; }
  .space { height: 86px; }
  .refs { margin-top: 3px; padding-top: 3px; border-top: 1px solid #b5b5b5; color: #777; display: flex; flex-direction: column; gap: 21px; height: 70px; border-bottom: 1px solid #b5b5b5; }
`, () => `
  <panel-title><span></span></panel-title>
  <div class="box"><ui-icon name="eye"></ui-icon></div>
  <div class="gap"></div>
  <panel-title>Re</panel-title>
  <span class="pad def">Def</span>
  <div class="box on"><ui-icon name="material"></ui-icon></div>
  <label class="pad ren" for="ren">Ren</label>
  <input id="ren" value="0">
  <panel-title>Fav</panel-title>
  <div class="list">Typ${['label', 'label', 'zone', 'mesh', 'line', 'circle', 'polyline', 'spline', 'drawing', 'star', 'section'].map(n => `<ui-icon name="${n}"></ui-icon>`).join('')}</div>
  <ui-icon name="infocircle"></ui-icon>
  <panel-title>Tra</panel-title>
  <div class="space"></div>
  <div class="box"><ui-icon name="ghost"></ui-icon></div>
  <div class="box" style="background:#c8c8c8"><ui-icon name="boxgrey"></ui-icon></div>
  <div class="refs"><span>Refe</span><span>Acti</span></div>
`);

define('coord-bar', `
  :host { display: flex; align-items: center; height: 24px; border-top: 1px solid #fff; font-family: "Liberation Sans", sans-serif; --icon: 14px; }
  button { display: grid; place-items: center; flex: none; padding: 0; border: 1px solid #b9b9b9; background: #e4e4e4; width: 21px; height: 18px; overflow: hidden; }
  button.on { border-color: #4f93cf; background: #c2ddf4; }
  button.flat { display: flex; align-items: center; justify-content: center; gap: 0; border: 0; background: none; width: 23px; }
  button.flat ui-icon + ui-icon { --icon: 7px; align-self: flex-end; }
  button.slim { width: 9px; --icon: 8px; }
  button.tiny { width: 10px; height: 10px; --icon: 8px; }
  .a { width: 10px; margin: 0 5px 0 9px; --icon: 10px; }
  .coords { display: grid; grid-template-columns: 14px 62px; gap: 1px 0; font-weight: bold; }
  .coords input, .z input { height: 10px; min-width: 0; padding: 0 1px; border: 0; background: #fff; font-weight: bold; }
  .coords label { line-height: 10px; text-align: right; padding-right: 2px; }
  .z { display: grid; grid-template-columns: 17px 42px 20px; width: 79px; font-weight: bold; line-height: 10px; gap: 1px 0; align-items: center; }
  .z label { padding-left: 4px; }
  .z input { grid-column: 2 / 4; width: 62px; }
  .z span { grid-column: 1 / 3; white-space: nowrap; }
  .z .tiny { margin-left: 10px; }
  .tools { display: flex; align-items: center; gap: 2px; height: 100%; }
  .half { display: grid; grid-template-columns: 51px 10px; width: 61px; line-height: 10px; align-items: start; padding-left: 2px; }
  .half .tiny { grid-row: 1 / 3; grid-column: 2; }
  .half b, .half span { grid-column: 1; }
  .cmd { display: flex; gap: 7px; margin-left: 1px; }
  .cmd button { width: 42px; height: 17px; background: #cdcdcd; border-color: #c0c0c0; color: #858585; font: 8px/12px "Open Sans", sans-serif; }
  tool-row { margin-left: auto; --slot: 18px; --icon: 13px; padding-right: 4px; }
`, () => `
  <button class="on a" aria-label="Relative"><ui-icon name="tri"></ui-icon></button>
  <div class="coords">
    <label for="r">Δr:</label><input id="r" value="*****">
    <label for="an">a:</label><input id="an" value="*****">
  </div>
  <tool-sep style="margin-right:3px"></tool-sep>
  <div class="tools"><button class="flat" style="width:18px" aria-label="Gravity"><ui-icon name="gravity"></ui-icon></button></div>
  <div class="z">
    <label for="z">Δz:</label><input id="z" value="0&quot;">
    <span>to Project Zero</span><button class="tiny" aria-label="Origin"><ui-icon name="right"></ui-icon></button>
  </div>
  <tool-sep grip></tool-sep>
  <div class="tools">
    <button aria-label="Guide lines"><ui-icon name="setsquare"></ui-icon></button>
    <button class="slim" aria-label="Guide options"><ui-icon name="right"></ui-icon></button>
    <tool-sep></tool-sep>
    ${['check', 'perp', 'gridsnap'].map(n => `<button class="flat" aria-label="${n}"><ui-icon name="${n}"></ui-icon><ui-icon name="right"></ui-icon></button>`).join('')}
    <button aria-label="Snap"><ui-icon name="gearwand"></ui-icon></button>
    <tool-sep></tool-sep>
    <button class="on" aria-label="Snap guides"><ui-icon name="guides"></ui-icon></button>
    <button class="slim" aria-label="Snap options"><ui-icon name="right"></ui-icon></button>
  </div>
  <div class="half"><b>Half</b><span>2</span><button class="tiny" aria-label="Snap points"><ui-icon name="right"></ui-icon></button></div>
  <tool-sep></tool-sep>
  <div class="cmd"><button disabled>OK</button><button disabled>Cancel</button></div>
  <tool-row items=": boxsel | fly pan spin | play snapb housegrey | orbit explode"></tool-row>
`);

define('status-bar', `
  :host { display: flex; align-items: center; justify-content: space-between; height: 16px; padding: 0 32px 0 0; border-top: 1px solid #d4d4d4; font: 8px/14px "Open Sans", sans-serif; --icon: 13px; }
`, () => `<span>nd Hold Ctrl+Shift to Toggle Element/Sub-Element Selection.</span><ui-icon name="msgs"></ui-icon>`);

define('task-bar', `
  :host { display: flex; height: 13px; background: #020408; overflow: hidden; --icon: 16px; }
  .search { width: 90px; background: #2b2b2b; }
  button { width: 35px; height: 22px; padding: 6px 0 0; border: 0; background: none; display: flex; justify-content: center; }
  .on { margin-left: 7px; background: #2d3034; }
  .tray { display: flex; margin-left: auto; }
  .tray button { width: 20px; padding-top: 5px; }
`, () => `
  <div class="search"></div>
  ${['edge', 'tfolder', 'outlook', 'lens', 'pdf', 'redapp', 'word', 'excel', 'peak', 'cal', 'sun', 'ie', 'gold'].map(n => `<button aria-label="${n}"><ui-icon name="${n}"></ui-icon></button>`).join('')}
  <button class="on" aria-label="archicad"><ui-icon name="archi"></ui-icon></button>
  <div class="tray">${['tray', 'coin'].map(n => `<button aria-label="${n}"><ui-icon name="${n}"></ui-icon></button>`).join('')}</div>
`);

define('cad-app', `
  :host { display: flex; flex-direction: column; height: 100vh; overflow: hidden; }
  main { flex: 1; min-height: 0; display: grid; grid-template-columns: 28px 66px minmax(0, 1fr) 14px; column-gap: 3px; }
  .centre { display: flex; flex-direction: column; min-height: 0; border-right: 1px solid #ccc; padding-bottom: 1px; }
`, () => `
  <menu-bar></menu-bar>
  <tool-area></tool-area>
  <main>
    <left-panel></left-panel>
    <toolbox-panel></toolbox-panel>
    <div class="centre">
      <info-dock></info-dock>
      <tab-strip></tab-strip>
      <plan-canvas></plan-canvas>
      <view-bar></view-bar>
    </div>
    <right-panel></right-panel>
  </main>
  <coord-bar></coord-bar>
  <status-bar></status-bar>
  <task-bar></task-bar>
`);
</script>
</body>
</html>
